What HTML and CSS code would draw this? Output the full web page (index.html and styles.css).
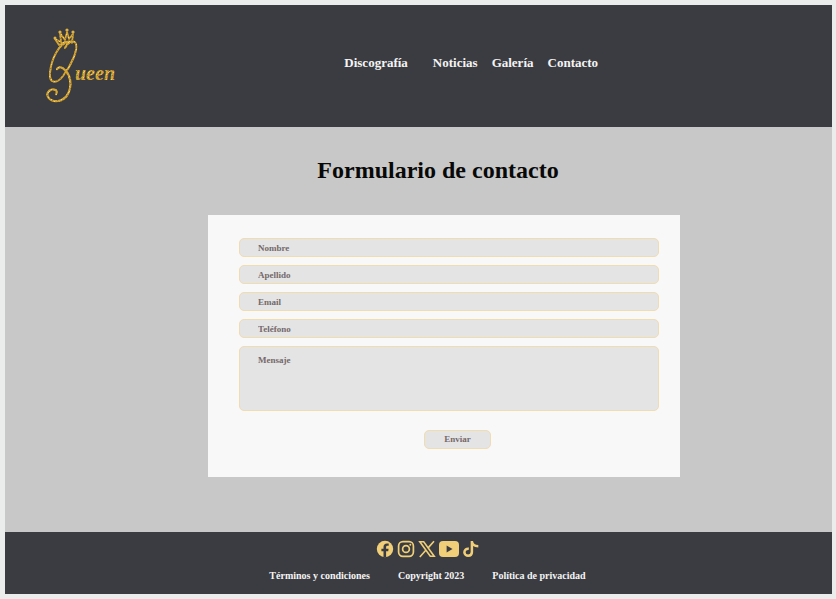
FILE: index.html
```html
<!DOCTYPE html>
<html lang="es">
<head>
<meta charset="utf-8">
<meta name="viewport" content="width=device-width, initial-scale=1">
<title>Formulario de contacto</title>
<link rel="stylesheet" href="styles.css">
</head>
<body>
<header class="site-header">
  <a class="logo" href="#" aria-label="Queen">
    <svg viewBox="0 0 76 78" width="76" height="78" aria-hidden="true">
      <defs>
        <pattern id="glitter" width="5" height="5" patternUnits="userSpaceOnUse">
          <rect width="5" height="5" fill="#d5a534"/>
          <path d="M0 0h1v1H0zM3 2h1v1H3zM1 4h1v1H1z" fill="#f0d070"/>
          <path d="M2 1h1v1H2zM4 3h1v1H4z" fill="#a77c20"/>
        </pattern>
      </defs>
      <g fill="none" stroke="url(#glitter)" stroke-linecap="round" stroke-linejoin="round">
        <path stroke-width="2" d="M26 15C15 16 8 34 7 46c-1 11 7 11 13 3 8-10 15-26 13-32-2-5-8-2-11 4"/>
        <path stroke-width="2.2" d="M14 42c3-4 9 0 12 7 4 11-1 24-11 25C6 75 2 68 6 64c4-3 10-1 7 3"/>
        <path stroke-width="1.7" d="M16 18l-4-6 6 3-1-9 5 7 2-8 2 7 4-5-1 9M16 18c4-3 8-4 13-4"/>
      </g>
      <g fill="#dfb343">
        <circle cx="12" cy="11" r="1.5"/><circle cx="17" cy="5" r="1.6"/><circle cx="24" cy="3" r="1.6"/><circle cx="30" cy="5" r="1.6"/>
      </g>
      <text class="logo-text" x="32" y="53">ueen</text>
    </svg>
  </a>
  <nav class="main-nav" aria-label="Principal">
    <a class="nav-first" href="#">Discografía</a>
    <a href="#">Noticias</a>
    <a href="#">Galería</a>
    <a href="#">Contacto</a>
  </nav>
</header>
<main class="content">
  <h1>Formulario de contacto</h1>
  <form class="contact-form">
    <input type="text" placeholder="Nombre" aria-label="Nombre">
    <input type="text" placeholder="Apellido" aria-label="Apellido">
    <input type="email" placeholder="Email" aria-label="Email">
    <input type="tel" placeholder="Teléfono" aria-label="Teléfono">
    <textarea placeholder="Mensaje" aria-label="Mensaje"></textarea>
    <button type="submit">Enviar</button>
  </form>
</main>
<footer class="site-footer">
  <div class="social">
    <a href="#" aria-label="Facebook"><svg viewBox="0 0 18 18" width="18" height="18"><circle cx="9" cy="9" r="8.2" fill="#f0cf78"/><path d="M7.5 17.2v-6H5.4V8.7h2.1V7c0-2.4 1.3-3.6 3.4-3.6.8 0 1.4.1 1.8.2v2.1h-1.1c-1.2 0-1.5.6-1.5 1.4v1.6h2.5l-.4 2.5h-2.1v6z" fill="#3b3c41"/></svg></a>
    <a href="#" aria-label="Instagram"><svg viewBox="0 0 18 18" width="18" height="18" fill="none" stroke="#f0cf78" stroke-width="1.7"><rect x="1.6" y="1.6" width="14.8" height="14.8" rx="4.3"/><circle cx="9" cy="9" r="3.4"/><circle cx="13.3" cy="4.7" r="1" fill="#f0cf78" stroke="none"/></svg></a>
    <a href="#" aria-label="X"><svg viewBox="0 0 18 18" width="18" height="18" fill="none" stroke="#f0cf78" stroke-width="1.6"><path d="M1.8 1.7h3.9l10.5 14.6h-3.9zM16 1.2l-6.1 6.9M7.8 10.3l-6 6.7"/></svg></a>
    <a href="#" aria-label="YouTube"><svg viewBox="0 0 20 18" width="20" height="18"><rect y="1" width="20" height="16" rx="4" fill="#f0cf78"/><path d="M7.6 5.6v6.8L13.5 9z" fill="#3b3c41"/></svg></a>
    <a href="#" aria-label="TikTok"><svg viewBox="0 0 18 18" width="18" height="18" fill="none" stroke="#f0cf78" stroke-width="2.5"><path d="M9.9 1v11.1c0 5-7.5 4.8-7.5.2 0-2.6 2-3.9 4.4-3.6M9.9 1c.2 3.3 2.9 5.2 6.4 5.2"/></svg></a>
  </div>
  <div class="legal">
    <a href="#">Términos y condiciones</a>
    <span>Copyright 2023</span>
    <a href="#">Política de privacidad</a>
  </div>
</footer>
</body>
</html>
```
FILE: styles.css
```css
* {
  box-sizing: border-box;
}

body {
  margin: 0;
  min-height: 100vh;
  padding: 5px 4px 5px 5px;
  display: flex;
  flex-direction: column;
  background: #ebecec;
  font-family: "Liberation Serif", serif;
  font-weight: 700;
}

a {
  color: inherit;
  text-decoration: none;
}

svg {
  display: block;
}

.site-header {
  display: flex;
  align-items: center;
  padding: 22px 38px;
  background: #3b3c41;
  color: #f4f4f4;
}

.logo-text {
  font: italic 700 20px "Liberation Serif", serif;
  fill: url(#glitter);
}

.main-nav {
  display: flex;
  flex: 1;
  gap: 14px;
  padding: 0 0 6px 30%;
  font-size: 13px;
  line-height: 16px;
}

.nav-first {
  margin-right: 11px;
}

.content {
  flex: 1;
  display: flex;
  flex-direction: column;
  align-items: center;
  padding: 28px 16px 55px 67px;
  background: #c8c8c8;
}

h1 {
  margin: 0 12px 30px 0;
  color: #080808;
  font-size: 24px;
  line-height: 30px;
}

.contact-form {
  display: flex;
  flex-direction: column;
  gap: 8px;
  width: 100%;
  max-width: 472px;
  padding: 23px 21px 28px 31px;
  background: #f8f8f8;
}

input,
textarea,
button {
  display: block;
  width: 100%;
  height: 19px;
  margin: 0;
  padding: 0 18px;
  border: 1px solid #f1dcb2;
  border-radius: 5px;
  background: #e4e4e4;
  color: #75696b;
  font: inherit;
  font-size: 9px;
  line-height: 17px;
}

::placeholder {
  color: #75696b;
  opacity: 1;
}

textarea {
  height: 65px;
  padding-top: 5px;
  resize: none;
}

button {
  width: 67px;
  align-self: center;
  margin: 11px 0 0 17px;
}

.site-footer {
  padding: 8px 16px 10px;
  background: #3b3c41;
  color: #f4f4f4;
}

.social {
  display: flex;
  justify-content: center;
  gap: 3px;
  padding-left: 18px;
}

.legal {
  display: flex;
  justify-content: center;
  gap: 28px;
  padding: 10px 0 0 18px;
  font-size: 10px;
  line-height: 16px;
}
```
